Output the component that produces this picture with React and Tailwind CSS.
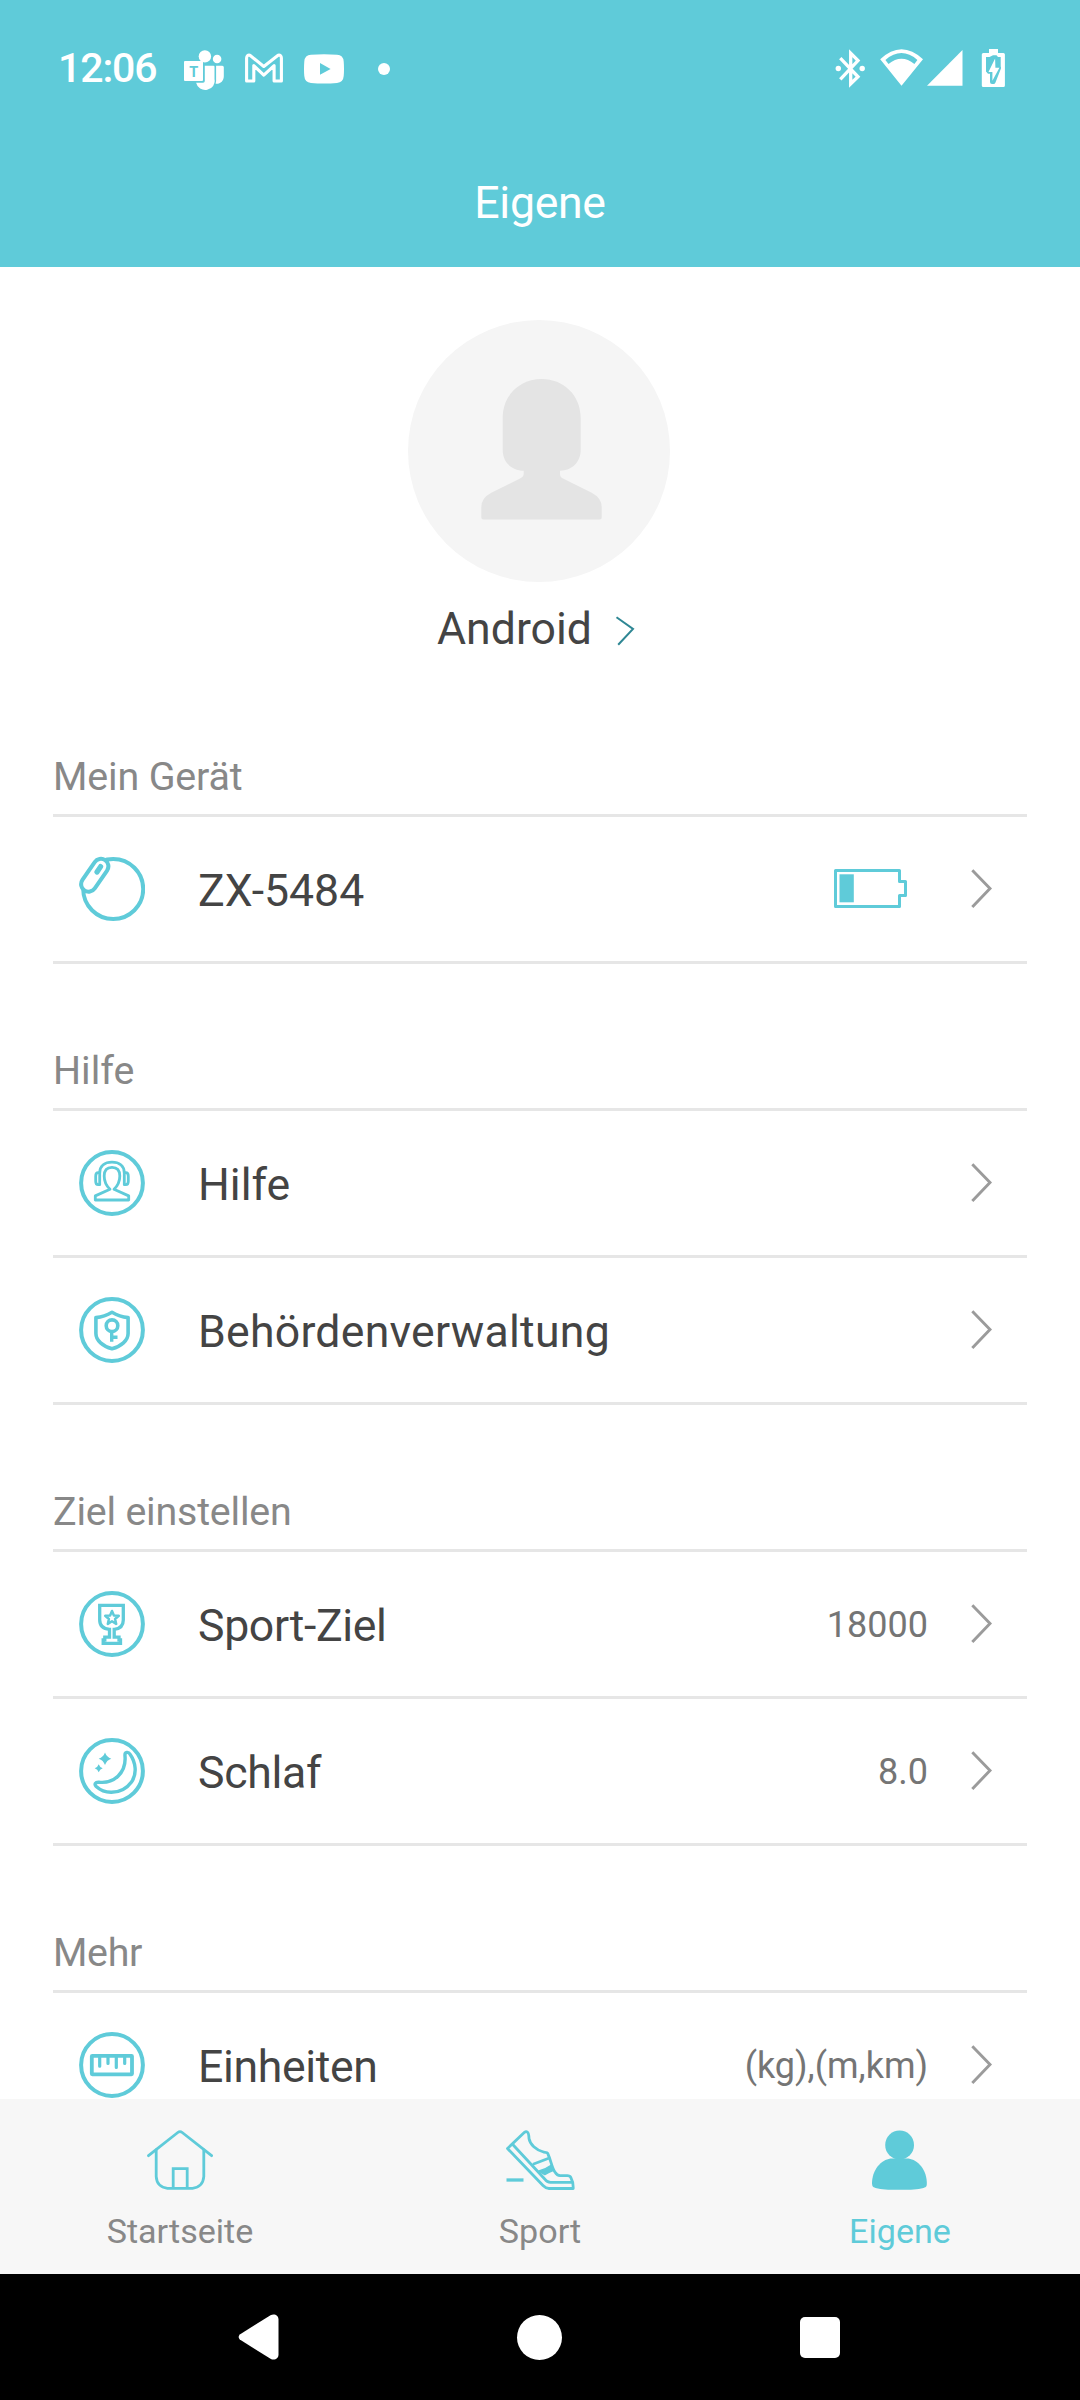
import React, { useState } from 'react';

const CYAN = '#5fcbd9';

// --- Status bar ---
const StatusBar = () => (
  <div className="flex h-[136px] items-center pl-[58px] pr-[75px] text-white">
    <span className="w-[126px] pt-[1px] text-[41px] leading-none font-medium tracking-[-1.1px]">12:06</span>
    <svg className="h-11 w-10" viewBox="184 46 40 44" fill="currentColor">
      <circle cx="204.9" cy="56.4" r="6.2" />
      <circle cx="217.1" cy="59" r="4.3" />
      <path d="M204.8 65.7h8.7q1 0 1 1v12.5a9.3 8.8 0 0 1-18.4 3.6h7q1.7 0 1.7-1.7z" />
      <path d="M216.1 65.7h6.2q1.5 0 1.500 1.500v9c0 4.800-3.300 7.900-8.200 7.500q.8-2.300.5-4.500z" />
      <rect x="184" y="61" width="19" height="20" rx="1" />
      <text x="193.800" y="76.500" textAnchor="middle" fontSize="14.500" fontWeight="700" fill={CYAN}>T</text>
    </svg>
    <svg className="ml-[21px] h-11 w-10" viewBox="245 46 40 44" fill="none" stroke="currentColor" strokeWidth="3.1" strokeLinejoin="round">
      <path d="M246.6 81V58Q246.8 54.6 249.9 55.2L263.8 66.5 278.1 55.2Q281.3 54.6 281.4 58V81h-7.3V65.6L263.8 75.2 253.8 65.6V81z" />
    </svg>
    <svg className="ml-[19px] h-11 w-10" viewBox="304 46 40 44" fill="currentColor">
      <path fillRule="evenodd" d="M311 54.8Q324 53.8 337 54.8 343.2 55 343.7 61.5 344.3 69 343.7 76 343.2 82.6 337 82.9 324 83.9 311 82.9 304.8 82.6 304.3 76 303.7 69 304.3 61.5 304.8 55 311 54.8zM320 63v11.7L330.6 68.9z" />
    </svg>
    <span className="ml-[34px] mt-[2px] size-3 rounded-full bg-white" />
    <svg className="ml-auto h-11 w-[30px]" viewBox="835 46 30 44" fill="none" stroke="currentColor" strokeWidth="3.3">
      <path d="M840.3 58.2 858 76.8 850.7 83.8V53.2L858 60.6 840.3 79.3" />
      <circle cx="838.3" cy="68.5" r="2.7" fill="currentColor" stroke="none" />
      <circle cx="862.2" cy="68.5" r="2.7" fill="currentColor" stroke="none" />
    </svg>
    <svg className="ml-[15px] h-11 w-[43px]" viewBox="880 46 43 44" fill="currentColor">
      <path fillRule="evenodd" d="M880.2 59.3Q901.5 39.3 923 59.3L901.5 85.7zM885.4 59.9Q901.5 46.3 917.4 59.9L914.4 64Q901.5 53.5 888.5 64z" />
    </svg>
    <svg className="ml-1 h-11 w-9" viewBox="927 46 36 44" fill="currentColor">
      <path d="M927 85.7h35.5V50z" />
    </svg>
    <svg className="ml-[18px] h-11 w-6" viewBox="981 46 24 44">
      <path fill="currentColor" d="M989 49h9v4h5.4q1.5 0 1.5 1.5v31q0 1.5-1.5 1.5h-20.1q-1.5 0-1.5-1.5v-31q0-1.5 1.5-1.5h5.7z" />
      <path fill={CYAN} d="M986 57h3.5l3.5-1.7h3.5L998 57h2.7v11.5L986 72z" />
      <path fill={CYAN} stroke={CYAN} strokeWidth="4" strokeLinejoin="round" d="M994.9 60 988.7 71.7h3.3v10.4h1.5L999 68h-3.8z" />
      <path fill="currentColor" d="M995.1 58.5 988.5 71.9h3.9v8.9L999.4 67.7h-4z" />
    </svg>
  </div>
);

// --- Row icons, all on a 66px grid ---
const Ring = ({ children }) => (
  <svg className="size-[66px] shrink-0" viewBox="0 0 66 66" fill="none" stroke={CYAN}>
    <circle cx="33" cy="33" r="30.9" strokeWidth="4" />
    {children}
  </svg>
);

const BandIcon = () => (
  <svg className="size-[66px] shrink-0" viewBox="0 0 66 66" fill="none" stroke={CYAN} strokeLinecap="round">
    <circle cx="34.2" cy="33" r="30" strokeWidth="4" />
    <path d="M21.9 10.3 9.6 28.2" strokeWidth="19" />
    <path d="M21.9 10.3 9.6 28.2" strokeWidth="11" stroke="#fff" />
    <path d="M21.6 10.6 18 16" strokeWidth="5.2" />
  </svg>
);

const SupportIcon = () => (
  <Ring>
    <g strokeWidth="2.8" strokeLinejoin="round">
      <path d="M20.7 23C20.7 15.5 26 12.1 33 12.1S45.3 15.5 45.3 23" />
      <path d="M20.7 22.7h-1.5q-2.5 0-2.5 3.5v5q0 3.5 2.5 3.5h1.5zM45.3 22.7h1.5q2.5 0 2.5 3.5v5q0 3.5-2.5 3.5h-1.5z" />
      <path d="M31 39.3C27.5 36 25.2 31 25.2 26 25.2 20 28.5 17.3 33 17.3S40.8 20 40.8 26C40.8 31 38.5 36 35 39.3L49.7 45.9V50H16.3V45.9z" />
    </g>
  </Ring>
);

const ShieldIcon = () => (
  <Ring>
    <g strokeWidth="3.6" strokeLinejoin="round">
      <path d="M33 15.2Q25.5 19.6 16.9 20.6V36.5C16.9 43.5 24 49.3 33 51.8 42 49.3 49.1 43.5 49.1 36.5V20.6Q40.5 19.6 33 15.2z" />
      <circle cx="33" cy="28.7" r="5.8" />
      <path d="M32.7 34.5v10.3M33 40.2h5.5" strokeWidth="3.4" />
    </g>
  </Ring>
);

const TrophyIcon = () => (
  <Ring>
    <path strokeWidth="3.3" d="M20.7 14.3H44.3V29C44.3 35 41 37.8 35.2 38.3V46.2H40V48.8H41.5V52.3H24.2V48.8H25.8V46.2H30.5V38.3C24.3 37.8 20.7 35 20.7 29z" />
    <path strokeWidth="2.5" strokeLinejoin="round" d="M33 20l1.9 4.4 4.9.4-3.7 3.2 1.1 4.9-4.2-2.6-4.2 2.6 1.1-4.9-3.7-3.2 4.9-.4z" />
  </Ring>
);

const MoonIcon = () => (
  <Ring>
    <path strokeWidth="3.4" strokeLinejoin="round" d="M46 18C45.5 13.5 49.5 13.5 51.2 16.5 56.5 24 58.5 35.5 52.5 44 47 51.5 39.5 54.4 32 54.3 26 54.3 20.5 51.5 17.2 48.5 15 46.3 16.3 44 19.8 44.2 34.5 46 47.5 35 46 18z" />
    <path fill={CYAN} stroke="none" d="M26 14.5Q27.6 19.1 32.3 20.7 27.6 22.3 26 27 24.4 22.3 19.7 20.7 24.4 19.1 26 14.5zM19.7 26.3Q20.7 29.3 23.7 30.3 20.7 31.3 19.7 34.3 18.7 31.3 15.7 30.3 18.7 29.3 19.7 26.3z" />
  </Ring>
);

const RulerIcon = () => (
  <Ring>
    <rect x="12.8" y="23.8" width="40.2" height="18.5" rx=".5" strokeWidth="3.8" />
    <path strokeWidth="3.2" strokeLinecap="round" d="M20.7 24v10.2M29 24v7.5M37.3 24v11.5M45.7 24v7.5" />
  </Ring>
);

const BatteryIcon = () => (
  <svg className="-mt-[2px] block h-[39px] w-[73px]" viewBox="0 0 73 39" fill="none" stroke={CYAN} strokeWidth="3" strokeLinejoin="round">
    <path d="M1.5 1.5H65.500V12.500H71.500V26.500H65.500V37.500H1.500z" />
    <rect x="5.500" y="5.300" width="14.300" height="28" fill={CYAN} stroke="none" />
  </svg>
);

const Chevron = () => (
  <svg className="h-10 w-[22px] shrink-0" viewBox="0 0 22 40" fill="none" stroke="#9b9b9b" strokeWidth="2.9">
    <path d="M1.300 1.300 19 19.500 1.300 38" />
  </svg>
);

// --- Tab icons ---
const HomeIcon = () => (
  <svg className="h-[60px] w-[66px]" viewBox="0 0 66 60" fill="none" stroke={CYAN} strokeWidth="2.8" strokeLinecap="round">
    <path d="M1.500 25.700 30.800 2.500Q33 .800 35.200 2.500L64.600 25.700" />
    <path d="M9.200 20V46.500Q9.800 57 20.500 58.300H45.500Q56 57 56.800 46.500V20M26.200 58V38.700H40.200V58" />
  </svg>
);

const ShoeIcon = () => (
  <svg className="h-[60px] w-[69px]" viewBox="0 0 69 60" fill="none" stroke={CYAN} strokeWidth="2.800" strokeLinejoin="round">
    <path d="M18.500 2.300 1.500 18.500 37 55.500Q40 58.500 43 58.500H67.200Q67.400 52 64.800 47.500 64 45.600 61 45.700H54Q51 45.400 49.300 42.500C45.500 37.500 45 30 42.300 25 42 22.500 40.500 22.400 37.500 22 30 20 24 14.500 23 8.500 22.800 4 22.500 2.800 21.500 2.200 20.500 1.300 19.500 1.500 18.500 2.300z" />
    <path d="M6.300 14 38.700 49Q41 52.300 44.500 52.300H66.300M27 34.300 42.700 28.200" />
    <path fill={CYAN} strokeWidth="1.500" d="M33 41Q40 39 44.700 35.500L47 40.500Q43 42 38.800 44.500z" />
    <path d="M.500 50H17.500" strokeWidth="3.300" />
  </svg>
);

const PersonIcon = () => (
  <svg className="mr-[2px] h-[60px] w-[55px]" viewBox="0 0 55 60" fill={CYAN}>
    <circle cx="27.600" cy="15" r="14.400" />
    <path d="M0 52C1 37 11.500 28.500 20 28.500H35C43.500 28.500 54 37 54.800 52 55 56 54.500 57 51.500 58 45 59.700 40 59.800 27.500 59.800S10 59.700 3.500 58C.500 57 0 56 0 52z" />
  </svg>
);

const sections = [
  {
    title: 'Mein Gerät',
    tracking: 'tracking-[-0.15px]',
    rows: [{ label: 'ZX-5484', icon: BandIcon, battery: true }],
  },
  {
    title: 'Hilfe',
    rows: [
      { label: 'Hilfe', icon: SupportIcon },
      { label: 'Behördenverwaltung', icon: ShieldIcon, tracking: 'tracking-[0.25px]' },
    ],
  },
  {
    title: 'Ziel einstellen',
    tracking: 'tracking-[-0.2px]',
    rows: [
      { label: 'Sport-Ziel', icon: TrophyIcon, value: '18000', tracking: 'tracking-[-0.35px]' },
      { label: 'Schlaf', icon: MoonIcon, value: '8.0', tracking: 'tracking-[-0.3px]' },
    ],
  },
  {
    title: 'Mehr',
    tracking: 'tracking-[-0.3px]',
    rows: [{ label: 'Einheiten', icon: RulerIcon, value: '(kg),(m,km)', tracking: 'tracking-[-0.35px]' }],
  },
];

const tabs = [
  { id: 'home', label: 'Startseite', icon: HomeIcon },
  { id: 'sport', label: 'Sport', icon: ShoeIcon },
  { id: 'own', label: 'Eigene', icon: PersonIcon },
];

const Row = ({ label, icon: Icon, value, battery, tracking = '' }) => (
  <div className="flex h-[147px] items-center border-b-[3px] border-[#e6e6e6] pl-[26px] pr-[34px]">
    <Icon />
    <span className={`ml-[53px] flex-1 pt-[3px] text-[44.6px] leading-[52px] text-[#444] ${tracking}`}>{label}</span>
    {value && <span className="mr-[43px] pt-[3px] text-[36px] leading-[43px] text-[#757575]">{value}</span>}
    {battery && <span className="mr-16"><BatteryIcon /></span>}
    <Chevron />
  </div>
);

const App = () => {
  const [activeTab, setActiveTab] = useState('own');

  return (
    <div className="flex h-[2400px] w-[1080px] flex-col overflow-hidden bg-white font-['Roboto',sans-serif]">
      <header className="h-[267px] shrink-0 bg-[#5fcbd9]">
        <StatusBar />
        <h1 className="flex h-[131px] items-center justify-center pt-[3px] text-[44.6px] leading-[52px] tracking-[-0.3px] text-white">Eigene</h1>
      </header>

      <main className="min-h-0 flex-1 overflow-hidden">
        <div className="flex h-[403px] flex-col items-center pt-[53px]">
          <svg className="mr-[2px] size-[262px] shrink-0" viewBox="0 0 262 262">
            <circle cx="131" cy="131" r="131" fill="#f5f5f5" />
            <path fill="#e4e4e4" d="M94.700 98C94.700 75 112 59 133.700 59S172.700 75 172.700 98V130C172.700 142 164 150.700 152 150.700V154Q152 157 155 158.500L183.700 172.700Q193.700 178 193.700 187V197.500Q193.700 199.500 191.700 199.500H75.300Q73.300 199.500 73.300 197.500V187Q73.300 178 83.300 172.700L112 158.500Q115.700 156.500 115.700 154V150.700C103.500 150.700 94.700 142 94.700 130z" />
          </svg>
          <div className="mt-[21px] mr-[2px] flex items-center gap-[23px]">
            <span className="text-[44.6px] leading-[52px] text-[#444]">Android</span>
            <svg className="mt-[3px] h-[30px] w-[26px]" viewBox="0 0 26 30" fill="none" stroke="#2f8794" strokeWidth="2">
              <path d="M1.500 1.300 18 13 3.200 28.700" />
            </svg>
          </div>
        </div>

        {sections.map(({ title, tracking = '', rows }) => (
          <section key={title} className="px-[53px]">
            <h2 className={`flex h-[147px] items-end border-b-[3px] border-[#e6e6e6] pb-[14px] text-[39.4px] leading-[46px] text-[#888] ${tracking}`}>{title}</h2>
            {rows.map((row) => <Row key={row.label} {...row} />)}
          </section>
        ))}
      </main>

      <nav className="grid h-[175px] shrink-0 grid-cols-3 bg-[#f7f7f7]">
        {tabs.map(({ id, label, icon: Icon }) => (
          <button key={id} onClick={() => setActiveTab(id)} className={`flex flex-col items-center pt-[31px] text-[34.1px] leading-10 ${activeTab === id ? 'text-[#5fcbd9]' : 'text-[#888]'}`}>
            <Icon />
            <span className="mt-[21px]">{label}</span>
          </button>
        ))}
      </nav>

      <div className="flex h-[126px] shrink-0 items-center gap-[238px] bg-black pl-[238px]">
        <svg className="h-[46px] w-[41px]" viewBox="0 0 41 46" fill="#fff">
          <path d="M1.800 20.500 32.500 1.300C36-.800 40.500 1 40.500 5.500V40.500C40.500 45 36 46.800 32.500 44.700L1.800 25.500Q-.500 23 1.800 20.500z" />
        </svg>
        <span className="size-[45px] rounded-full bg-white" />
        <span className="h-[41px] w-10 rounded-[5px] bg-white" />
      </div>
    </div>
  );
};

export default App;
